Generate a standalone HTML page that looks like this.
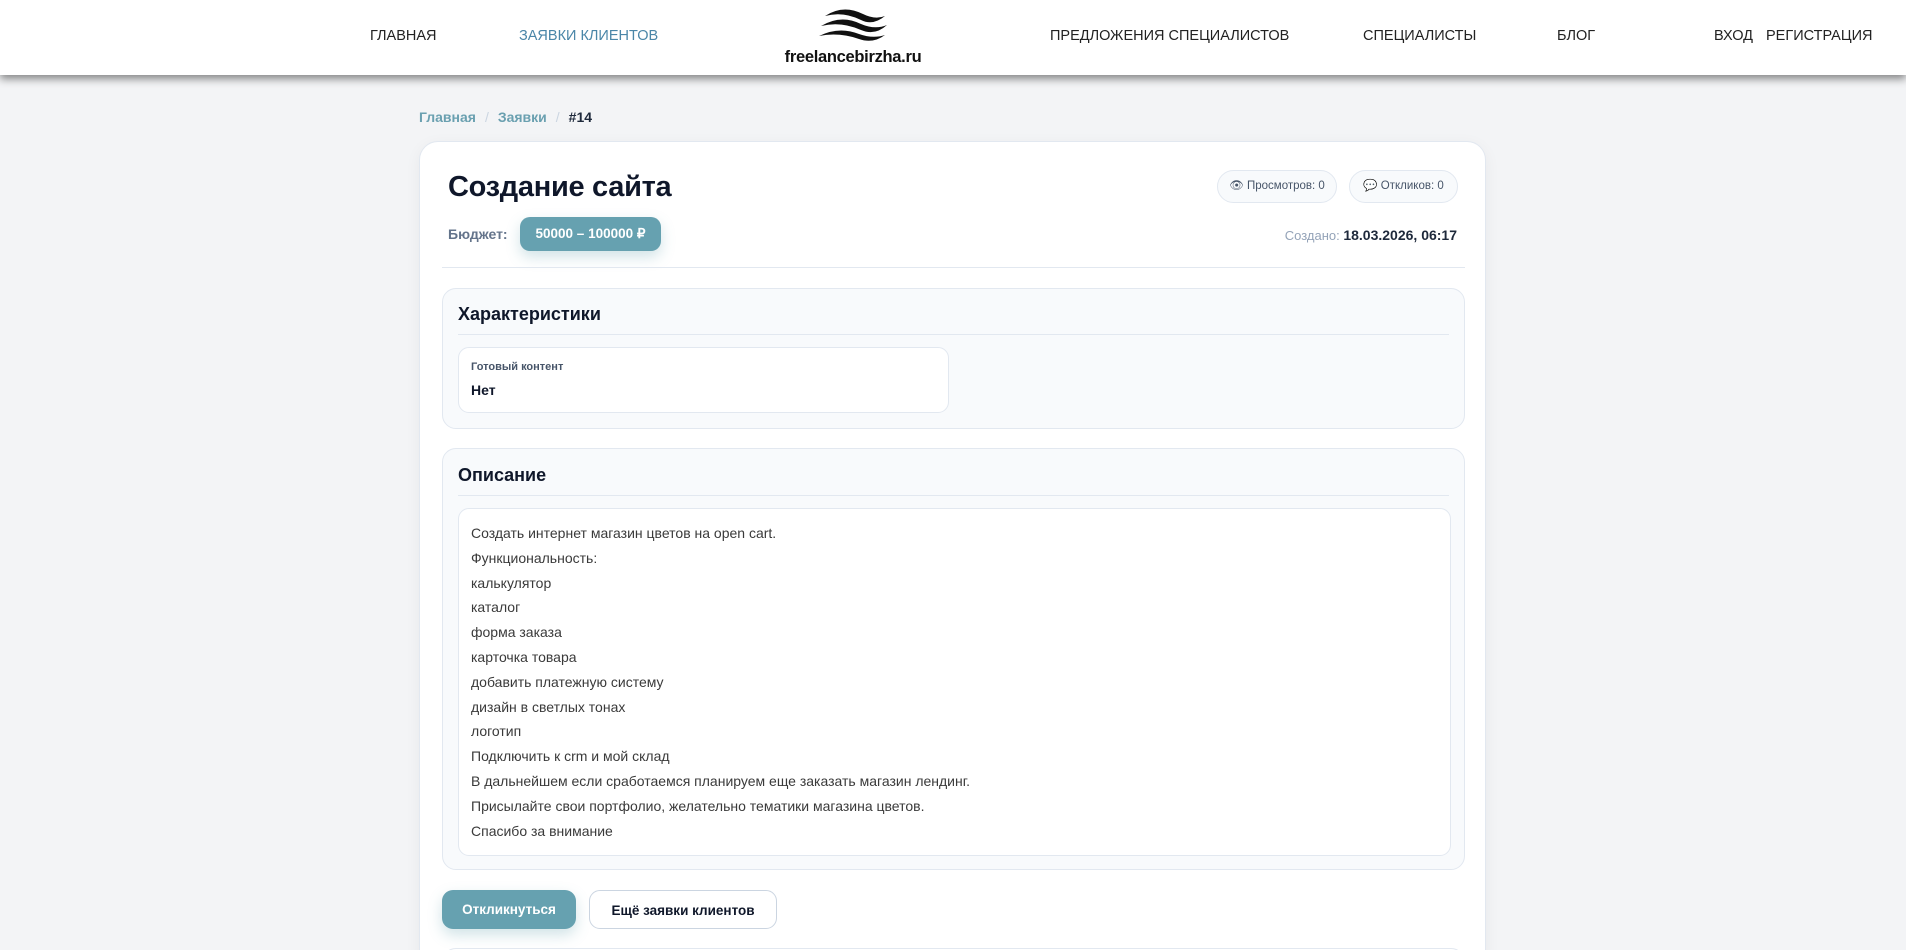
<!DOCTYPE html>
<html><head><meta charset="utf-8"><style>
*{box-sizing:border-box;margin:0;padding:0}
html,body{width:1906px;height:950px;overflow:hidden}
body{background:#f3f4f6;font-family:"Liberation Sans","Noto Sans CJK SC",sans-serif;color:#0f172a;position:relative}
.hdr{position:absolute;left:0;top:0;width:1906px;height:75px;background:#fff;box-shadow:0 4px 8px rgba(0,0,0,.45)}
.nav{position:absolute;top:28px;font-size:14.5px;color:#222;white-space:nowrap}
.logo{position:absolute;left:782px;top:6px;width:142px;text-align:center}
.logo span{display:block;font-weight:bold;font-size:16.5px;color:#111;margin-top:1px;letter-spacing:-.3px}
.bc{position:absolute;left:419px;top:109px;font-size:14px;font-weight:bold;color:#6aa0b0}
.bc i{font-style:normal;color:#cbd5e1;font-weight:normal;margin:0 9px}
.bc b{color:#1e293b}
.card{position:absolute;left:419px;top:141px;width:1067px;height:830px;background:#fff;border:1px solid #e2e8f0;border-radius:19px;box-shadow:0 4px 16px rgba(0,0,0,.05)}
.a{position:absolute}
.chip{position:absolute;height:33px;border:1px solid #e2e8f0;border-radius:17px;background:#f8fafc;font-size:11.5px;color:#475569;line-height:31px;text-align:center}
.box{position:absolute;left:22px;width:1023px;background:#f8fafc;border:1px solid #e2e8f0;border-radius:14px}
.box h3{position:absolute;left:15px;font-size:18px;font-weight:bold;color:#0f172a}
.box .ln{position:absolute;left:15px;right:15px;height:1px;background:#e2e8f0}
.inner{position:absolute;background:#fff;border:1px solid #e2e8f0;border-radius:11px}
.desc{font-size:14px;color:#3a3a3a;line-height:24.8px;padding:12px 12px}
.btn{position:absolute;top:748px;height:39px;border-radius:11px;font-weight:bold;font-size:13.5px;line-height:39px;text-align:center}
</style></head><body>
<div class="hdr">
<div class="nav" style="left:370px">ГЛАВНАЯ</div>
<div class="nav" style="left:519px;color:#4a86a8">ЗАЯВКИ КЛИЕНТОВ</div>
<div class="logo"><svg width="80" height="36" viewBox="0 0 80 36"><path d="M12 10 Q30 -2 50 8 Q62 14 72 10 Q60 20 48 14 Q30 5 12 10Z M8 20 Q28 8 48 18 Q62 24 74 19 Q62 30 48 24 Q28 15 8 20Z M6 30 Q26 20 46 28 Q60 33 72 29 Q60 38 46 33 Q26 26 6 30Z" fill="#111"/></svg><span>freelancebirzha.ru</span></div>
<div class="nav" style="left:1050px">ПРЕДЛОЖЕНИЯ СПЕЦИАЛИСТОВ</div>
<div class="nav" style="left:1363px">СПЕЦИАЛИСТЫ</div>
<div class="nav" style="left:1557px">БЛОГ</div>
<div class="nav" style="left:1714px">ВХОД</div>
<div class="nav" style="left:1766px">РЕГИСТРАЦИЯ</div>
</div>
<div class="bc">Главная<i>/</i>Заявки<i>/</i><b>#14</b></div>
<div class="card">
<div class="a" style="left:28px;top:29px;font-size:29px;font-weight:bold;letter-spacing:-.3px">Создание сайта</div>
<div class="a" style="left:28px;top:84px;font-size:14px;font-weight:bold;color:#64748b">Бюджет:</div>
<div class="a" style="left:100px;top:75px;width:141px;height:34px;background:#66a1b0;border-radius:10px;color:#fff;font-weight:bold;font-size:13.5px;line-height:34px;text-align:center;box-shadow:0 6px 14px rgba(102,161,176,.3)">50000 – 100000 ₽</div>
<div class="chip" style="left:797px;top:28px;width:120px">👁 Просмотров: 0</div>
<div class="chip" style="left:929px;top:28px;width:109px"><span style="color:#c4b5fd">💬</span> Откликов: 0</div>
<div class="a" style="right:28px;top:85px;font-size:13px;color:#94a3b8">Создано: <b style="color:#1e293b;font-size:14px">18.03.2026, 06:17</b></div>
<div class="a" style="left:22px;top:125px;width:1023px;height:1px;background:#e2e8f0"></div>
<div class="box" style="top:146px;height:141px">
<h3 style="top:15px">Характеристики</h3><div class="ln" style="top:45px"></div>
<div class="inner" style="left:15px;top:58px;width:491px;height:66px">
<div class="a" style="left:12px;top:13px;font-size:11px;font-weight:bold;color:#475569">Готовый контент</div>
<div class="a" style="left:12px;top:34px;font-size:14px;font-weight:bold">Нет</div></div>
</div>
<div class="box" style="top:306px;height:422px">
<h3 style="top:16px">Описание</h3><div class="ln" style="top:46px"></div>
<div class="inner desc" style="left:15px;top:59px;width:993px;height:348px">Создать интернет магазин цветов на open cart.<br>Функциональность:<br>калькулятор<br>каталог<br>форма заказа<br>карточка товара<br>добавить платежную систему<br>дизайн в светлых тонах<br>логотип<br>Подключить к crm и мой склад<br>В дальнейшем если сработаемся планируем еще заказать магазин лендинг.<br>Присылайте свои портфолио, желательно тематики магазина цветов.<br>Спасибо за внимание</div>
</div>
<div class="btn" style="left:22px;width:134px;background:#66a1b0;color:#fff;box-shadow:0 6px 14px rgba(102,161,176,.3)">Откликнуться</div>
<div class="btn" style="left:169px;width:188px;background:#fff;border:1px solid #cbd5e1;color:#0f172a">Ещё заявки клиентов</div>
<div class="box" style="top:806px;height:60px;background:#fff"></div>
</div>
</body></html>
